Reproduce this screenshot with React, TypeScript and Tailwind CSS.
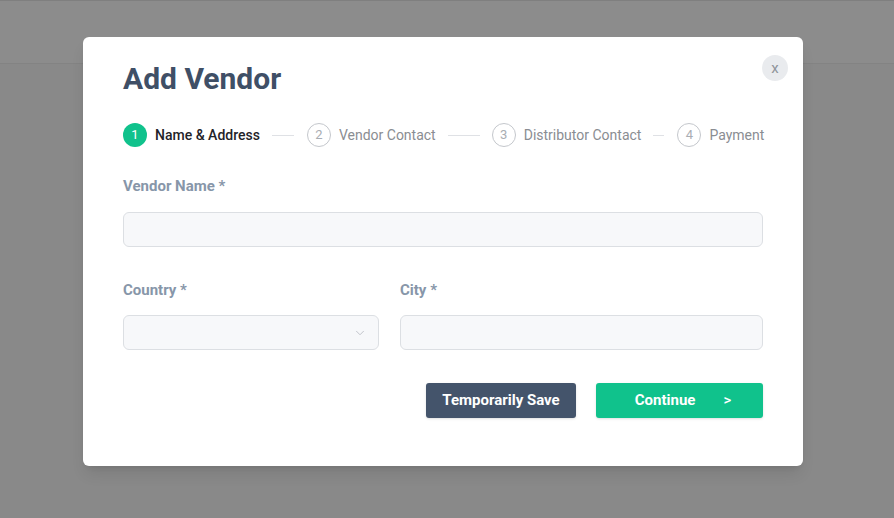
import React from 'react';
import { ChevronDown } from 'lucide-react';

const steps = [
  { n: 1, label: 'Name & Address', active: true, line: 'w-[22px] ml-3 mr-[13px]' },
  { n: 2, label: 'Vendor Contact', active: false, line: 'w-[32px] mx-3' },
  { n: 3, label: 'Distributor Contact', active: false, line: 'w-[11px] ml-3 mr-[13px]' },
  { n: 4, label: 'Payment', active: false, line: '' },
];

const Stepper = () => (
  <div className="flex items-center h-6 whitespace-nowrap">
    {steps.map((s) => (
      <React.Fragment key={s.n}>
        <div className="flex items-center gap-2 shrink-0">
          {s.active ? (
            <span className="w-6 h-6 rounded-full bg-[#10c28c] text-white text-[13px] flex items-center justify-center">
              {s.n}
            </span>
          ) : (
            <span className="w-6 h-6 rounded-full border border-[#c4c7cc] text-[#a9adb3] text-[13px] flex items-center justify-center">
              {s.n}
            </span>
          )}
          <span className={s.active ? 'text-[14px] font-medium text-[#1f2329]' : 'text-[14px] text-[#8a8d92]'}>
            {s.label}
          </span>
        </div>
        {s.line && <div className={`${s.line} h-px bg-[#dfe1e5] shrink-0`} />}
      </React.Fragment>
    ))}
  </div>
);

export default function App() {
  return (
    <div className="relative w-[894px] h-[518px] bg-[#898989] overflow-hidden" style={{ fontFamily: 'Roboto, "Noto Sans", sans-serif' }}>
      <div className="h-16 bg-[#8c8c8c] border-b border-[#838383] border-t border-t-[#7f7f7f]" />

      <div className="absolute left-[83px] top-[37px] w-[720px] bg-white rounded-[6px] px-10 pt-6 pb-12 shadow-lg">
        <button className="absolute right-[15px] top-[18px] w-[26px] h-[26px] rounded-full bg-[#e9ebee] text-[#8f949a] text-[15px] leading-none flex items-center justify-center">
          x
        </button>

        <h1 className="text-[30px] leading-9 font-bold text-[#3f4f66]">Add Vendor</h1>

        <div className="mt-[26px]">
          <Stepper />
        </div>

        <label className="block mt-[29px] text-[15px] leading-5 font-bold text-[#8796a9]">Vendor Name *</label>
        <div className="mt-4 h-[35px] rounded-[6px] border border-[#dcdfe3] bg-[#f7f8fa]" />

        <div className="mt-[33px] flex gap-[21px]">
          <div className="w-[256px]">
            <label className="block text-[15px] leading-5 font-bold text-[#8796a9]">Country *</label>
            <div className="mt-[15px] h-[35px] rounded-[6px] border border-[#dcdfe3] bg-[#f7f8fa] flex items-center justify-end pr-[11px]">
              <ChevronDown className="w-[14px] h-[14px] text-[#b9bdc3]" strokeWidth={1.5} />
            </div>
          </div>
          <div className="flex-1">
            <label className="block text-[15px] leading-5 font-bold text-[#8796a9]">City *</label>
            <div className="mt-[15px] h-[35px] rounded-[6px] border border-[#dcdfe3] bg-[#f7f8fa]" />
          </div>
        </div>

        <div className="mt-[33px] flex justify-end gap-5">
          <button className="w-[150px] h-[35px] rounded-[3px] bg-[#44546b] text-white text-[15px] font-bold shadow-sm">
            Temporarily Save
          </button>
          <button className="w-[167px] h-[35px] rounded-[3px] bg-[#10c28c] text-white text-[15px] font-bold shadow-sm flex items-center justify-center gap-[28px] pl-[7px]">
            <span>Continue</span>
            <span className="font-medium">&gt;</span>
          </button>
        </div>
      </div>
    </div>
  );
}
